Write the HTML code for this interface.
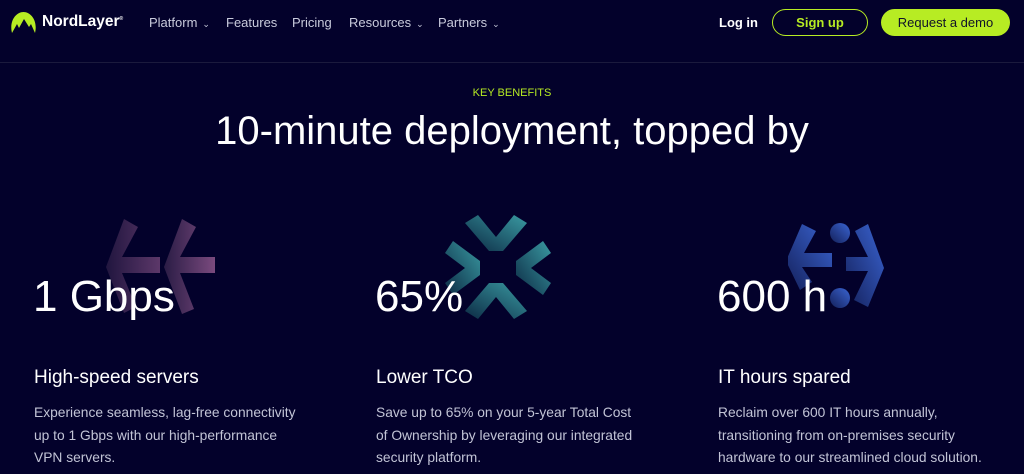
<!DOCTYPE html>
<html><head><style>
body{margin:0;width:1024px;height:474px;overflow:hidden;background:#03012b;font-family:"Liberation Sans",sans-serif;color:#fff;position:relative}
.a{position:absolute}
.nav{font-size:13px;color:#c9cbdc;top:15px}
.chev{font-size:9px;margin-left:5px}
.btn{position:absolute;top:9px;height:27px;border-radius:14px;box-sizing:border-box;font-size:13px;font-weight:bold;display:flex;align-items:center;justify-content:center}
.num{font-size:44px;top:272px}
.h{font-size:19px;top:367px}
.p{font-size:13.8px;line-height:22.5px;color:#c2c4d6;top:402px;width:320px;white-space:nowrap}
</style></head><body>
<svg class="a" style="left:10px;top:11px" width="27" height="23" viewBox="0 0 27 23"><path d="M2 22 C-1 10 6 1 13.5 1 C21 1 28 10 25 22 L21 13 L19 16 L14 8 L9 17 L7 13 Z" fill="#b7ec23"/></svg>
<div class="a" style="left:42px;top:13px;font-size:15.5px;font-weight:bold">NordLayer<sup style="font-size:5px">®</sup></div>
<div class="a nav" style="left:149px">Platform<span class="chev">⌄</span></div>
<div class="a nav" style="left:226px">Features</div>
<div class="a nav" style="left:292px">Pricing</div>
<div class="a nav" style="left:349px">Resources<span class="chev">⌄</span></div>
<div class="a nav" style="left:438px">Partners<span class="chev">⌄</span></div>
<div class="a" style="left:719px;top:15px;font-size:13px;font-weight:bold">Log in</div>
<div class="btn" style="left:772px;width:96px;border:1.5px solid #b7ec23;color:#b7ec23">Sign up</div>
<div class="btn" style="left:881px;width:129px;background:#b7ec23;color:#10122a;font-weight:normal">Request a demo</div>
<div class="a" style="left:0;top:62px;width:1024px;height:1px;background:#1b1a3d"></div>
<div class="a" style="left:0;width:1024px;top:87px;text-align:center;font-size:11px;color:#b7ec23">KEY BENEFITS</div>
<div class="a" style="left:0;width:1024px;top:109px;text-align:center;font-size:40px">10-minute deployment, topped by</div>
<svg class="a" style="left:100px;top:215px" width="115" height="100" viewBox="0 0 115 100">
<defs><linearGradient id="g1" x1="0" y1="0" x2="1" y2="0"><stop offset="0" stop-color="#2a1c45"/><stop offset="1" stop-color="#7a4a7e"/></linearGradient></defs>
<path d="M24 4 L38 12 L22 42 L60 42 L60 58 L22 58 L36 92 L24 98 L6 52 Z" fill="url(#g1)" opacity=".75"/>
<path d="M82 4 L96 12 L80 42 L115 42 L115 58 L80 58 L94 94 L82 99 L64 52 Z" fill="url(#g1)"/>
</svg>
<svg class="a" style="left:443px;top:213px" width="110" height="108" viewBox="0 0 110 108">
<defs><linearGradient id="g2" x1="0" y1="1" x2="1" y2="0"><stop offset="0" stop-color="#0c2a44"/><stop offset="1" stop-color="#3a9aa2"/></linearGradient></defs>
<g fill="url(#g2)"><path d="M22 10 L35 2 L53 24 L71 2 L84 10 L60 38 L46 38 Z"/><path d="M22 98 L35 106 L53 84 L71 106 L84 98 L60 70 L46 70 Z"/><path d="M2 40 L10 28 L37 48 L37 62 L10 82 L2 70 L22 55 Z"/><path d="M108 40 L100 28 L73 48 L73 62 L100 82 L108 70 L88 55 Z"/></g>
</svg>
<svg class="a" style="left:788px;top:220px" width="105" height="92" viewBox="0 0 105 92">
<defs><linearGradient id="g3" x1="0" y1="1" x2="1" y2="0"><stop offset="0" stop-color="#14205a"/><stop offset="1" stop-color="#3a64d2"/></linearGradient></defs>
<g fill="url(#g3)"><path d="M14 4 L28 11 L16 33 L44 33 L44 47 L14 47 L24 62 L12 70 L-2 41 Z"/><path d="M80 4 L67 11 L80 37 L58 37 L58 51 L80 51 L66 80 L80 87 L96 48 Z"/><circle cx="52" cy="13" r="10"/><circle cx="52" cy="78" r="10"/></g>
</svg>
<div class="a num" style="left:33px">1 Gbps</div>
<div class="a num" style="left:375px">65%</div>
<div class="a num" style="left:717px">600 h</div>
<div class="a h" style="left:34px">High-speed servers</div>
<div class="a h" style="left:376px">Lower TCO</div>
<div class="a h" style="left:718px">IT hours spared</div>
<div class="a p" style="left:34px">Experience seamless, lag-free connectivity<br>up to 1 Gbps with our high-performance<br>VPN servers.</div>
<div class="a p" style="left:376px">Save up to 65% on your 5-year Total Cost<br>of Ownership by leveraging our integrated<br>security platform.</div>
<div class="a p" style="left:718px">Reclaim over 600 IT hours annually,<br>transitioning from on-premises security<br>hardware to our streamlined cloud solution.</div>
</body></html>
